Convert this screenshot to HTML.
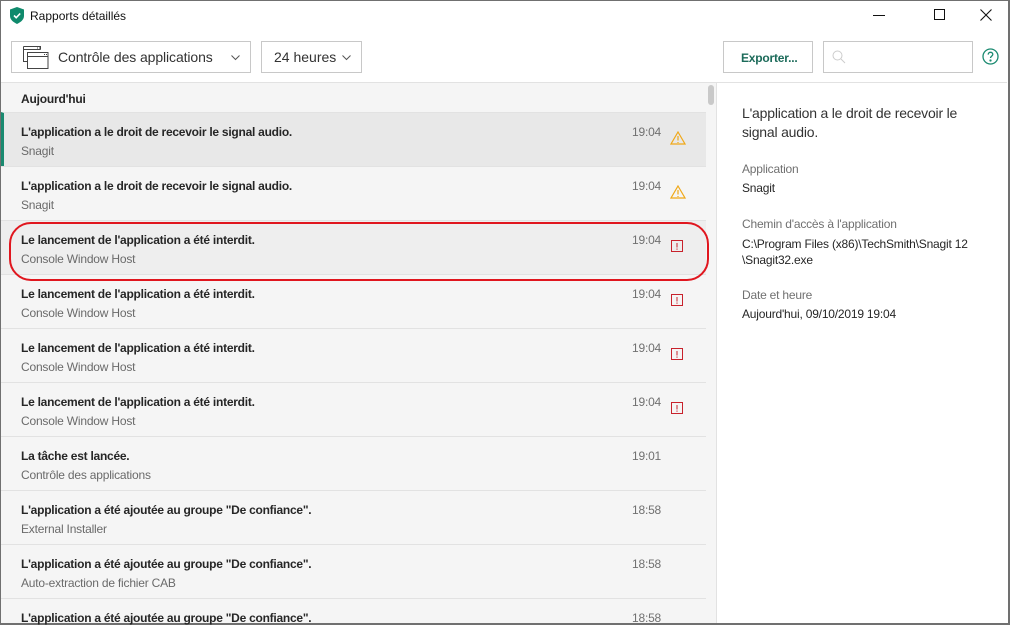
<!DOCTYPE html>
<html><head><meta charset="utf-8"><style>
*{margin:0;padding:0;box-sizing:border-box}
body{width:1010px;height:625px;overflow:hidden;background:#fff;font-family:"Liberation Sans",sans-serif;position:relative;color:#222}
.a{position:absolute}
.row{position:absolute;left:1px;width:705px;height:54px;background:#f5f5f5;border-top:1px solid #e2e2e2}
.t{position:absolute;left:20px;top:12px;font-size:12px;font-weight:bold;color:#262626;letter-spacing:-0.25px}
.s{position:absolute;left:20px;top:31px;font-size:12px;color:#6a6a6a;letter-spacing:-0.2px}
.tm{position:absolute;left:631px;top:12px;font-size:12px;color:#707070;letter-spacing:-0.2px}
.ic{position:absolute;left:669px;top:18px}
.lab{font-size:12px;color:#707070;letter-spacing:-0.2px}
.val{font-size:12px;color:#262626;letter-spacing:-0.2px}
.btn{position:absolute;border:1px solid #c8c8c8;background:#fff;height:32px;top:41px}
</style></head><body>
<div class="a" style="left:0;top:0;width:1010px;height:625px;border:1px solid #707070;border-bottom-width:2px;border-right-width:2px"></div>
<svg class="a" style="left:10px;top:7px" width="14" height="17" viewBox="0 0 14 17"><path d="M7 0 L14 2.5 V9 C14 13 10 15.5 7 17 C4 15.5 0 13 0 9 V2.5Z" fill="#0f8a6c"/><path d="M4 8.5 L6.2 10.7 L10.2 6.5" stroke="#fff" stroke-width="1.6" fill="none"/></svg>
<div class="a" style="left:30px;top:9px;font-size:12px;color:#111">Rapports détaillés</div>
<div class="a" style="left:873px;top:15px;width:12px;height:1px;background:#111"></div>
<div class="a" style="left:934px;top:9px;width:11px;height:11px;border:1px solid #111"></div>
<svg class="a" style="left:980px;top:9px" width="12" height="12"><path d="M0.5 0.5L11.5 11.5M11.5 0.5L0.5 11.5" stroke="#111" stroke-width="1.1"/></svg>
<div class="btn" style="left:11px;width:240px"></div>
<svg class="a" style="left:23px;top:46px" width="26" height="24" viewBox="0 0 26 24" fill="none" stroke="#444" stroke-width="1"><path d="M0.5 0.5H17.5V3.5M0.5 0.5V15.5H4.5"/><path d="M0.5 3.5H17.5"/><rect x="4.5" y="6.5" width="20.5" height="16"/><path d="M4.5 10.5H25"/><path d="M14 2h1M16 2h1M21 8.5h1M23 8.5h1"/></svg>
<div class="a" style="left:58px;top:49px;font-size:14px;color:#333;letter-spacing:-0.1px">Contrôle des applications</div>
<svg class="a" style="left:231px;top:55px" width="9" height="6"><path d="M0.5 0.5L4.5 4.5L8.5 0.5" stroke="#555" fill="none"/></svg>
<div class="btn" style="left:261px;width:101px"></div>
<div class="a" style="left:274px;top:49px;font-size:14px;color:#333">24 heures</div>
<svg class="a" style="left:342px;top:55px" width="9" height="6"><path d="M0.5 0.5L4.5 4.5L8.5 0.5" stroke="#555" fill="none"/></svg>
<div class="btn" style="left:723px;width:90px"></div>
<div class="a" style="left:741px;top:51px;font-size:12px;font-weight:bold;color:#1c6b5a;letter-spacing:-0.2px">Exporter...</div>
<div class="btn" style="left:823px;width:150px"></div>
<svg class="a" style="left:832px;top:50px" width="14" height="14" fill="none" stroke="#ccc"><circle cx="5.5" cy="5.5" r="4.5"/><path d="M9 9L13 13"/></svg>
<svg class="a" style="left:982px;top:48px" width="17" height="17" fill="none" stroke="#1a8a70" stroke-width="1.3"><circle cx="8.5" cy="8.5" r="7.5"/><path d="M6.2 6.6C6.2 5 7.3 4.3 8.5 4.3C9.8 4.3 10.8 5.1 10.8 6.4C10.8 8 8.5 8.2 8.5 10"/><circle cx="8.5" cy="12.5" r="0.5" fill="#1a8a70"/></svg>
<div class="a" style="left:1px;top:82px;width:1006px;height:1px;background:#e2e2e2"></div>
<div class="a" style="left:1px;top:83px;width:705px;height:29px;background:#f5f5f5"></div>
<div class="a" style="left:21px;top:92px;font-size:12px;font-weight:bold;color:#262626;letter-spacing:-0.2px">Aujourd'hui</div>
<div class="a" style="left:706px;top:83px;width:10px;height:540px;background:#f5f5f5"></div>
<div class="a" style="left:708px;top:85px;width:6px;height:20px;background:#c9c9c9;border-radius:3px"></div>
<div class="a" style="left:716px;top:83px;width:1px;height:540px;background:#e2e2e2"></div>

<div class="row" style="top:112px;background:#e8e8e8;border-left:3px solid #1a8a70"><div class="t" style="left:17px">L'application a le droit de recevoir le signal audio.</div><div class="s" style="left:17px">Snagit</div><div class="tm" style="left:628px">19:04</div><svg class="ic" style="left:666px" width="16" height="14"><path d="M8 1L15 13H1Z" fill="none" stroke="#f0a818" stroke-width="1.2"/><path d="M8 5V9.5M8 11v1" stroke="#f0a818" stroke-width="1.2"/></svg></div>
<div class="row" style="top:166px"><div class="t">L'application a le droit de recevoir le signal audio.</div><div class="s">Snagit</div><div class="tm">19:04</div><svg class="ic" width="16" height="14"><path d="M8 1L15 13H1Z" fill="none" stroke="#f0a818" stroke-width="1.2"/><path d="M8 5V9.5M8 11v1" stroke="#f0a818" stroke-width="1.2"/></svg></div>
<div class="row" style="top:220px;background:#eeeeee"><div class="t">Le lancement de l'application a été interdit.</div><div class="s">Console Window Host</div><div class="tm">19:04</div><svg class="ic" width="14" height="14"><rect x="1.5" y="1.5" width="11" height="11" fill="none" stroke="#c8222c"/><path d="M7 4V8.5M7 9.5v1.2" stroke="#c8222c"/></svg></div>
<div class="row" style="top:274px"><div class="t">Le lancement de l'application a été interdit.</div><div class="s">Console Window Host</div><div class="tm">19:04</div><svg class="ic" width="14" height="14"><rect x="1.5" y="1.5" width="11" height="11" fill="none" stroke="#c8222c"/><path d="M7 4V8.5M7 9.5v1.2" stroke="#c8222c"/></svg></div>
<div class="row" style="top:328px"><div class="t">Le lancement de l'application a été interdit.</div><div class="s">Console Window Host</div><div class="tm">19:04</div><svg class="ic" width="14" height="14"><rect x="1.5" y="1.5" width="11" height="11" fill="none" stroke="#c8222c"/><path d="M7 4V8.5M7 9.5v1.2" stroke="#c8222c"/></svg></div>
<div class="row" style="top:382px"><div class="t">Le lancement de l'application a été interdit.</div><div class="s">Console Window Host</div><div class="tm">19:04</div><svg class="ic" width="14" height="14"><rect x="1.5" y="1.5" width="11" height="11" fill="none" stroke="#c8222c"/><path d="M7 4V8.5M7 9.5v1.2" stroke="#c8222c"/></svg></div>
<div class="row" style="top:436px"><div class="t">La tâche est lancée.</div><div class="s">Contrôle des applications</div><div class="tm">19:01</div></div>
<div class="row" style="top:490px"><div class="t">L'application a été ajoutée au groupe "De confiance".</div><div class="s">External Installer</div><div class="tm">18:58</div></div>
<div class="row" style="top:544px"><div class="t">L'application a été ajoutée au groupe "De confiance".</div><div class="s">Auto-extraction de fichier CAB</div><div class="tm">18:58</div></div>
<div class="row" style="top:598px;height:25px"><div class="t">L'application a été ajoutée au groupe "De confiance".</div><div class="tm">18:58</div></div>

<div class="a" style="left:9px;top:222px;width:700px;height:59px;border:2px solid #e0161e;border-radius:22px"></div>

<div class="a" style="left:742px;top:104px;width:250px;font-size:14px;line-height:19px;color:#333;letter-spacing:-0.2px">L'application a le droit de recevoir le signal audio.</div>
<div class="a lab" style="left:742px;top:162px">Application</div>
<div class="a val" style="left:742px;top:181px">Snagit</div>
<div class="a lab" style="left:742px;top:217px">Chemin d'accès à l'application</div>
<div class="a val" style="left:742px;top:236px;line-height:16px">C:\Program Files (x86)\TechSmith\Snagit 12<br>\Snagit32.exe</div>
<div class="a lab" style="left:742px;top:288px">Date et heure</div>
<div class="a val" style="left:742px;top:307px">Aujourd'hui, 09/10/2019 19:04</div>
</body></html>
